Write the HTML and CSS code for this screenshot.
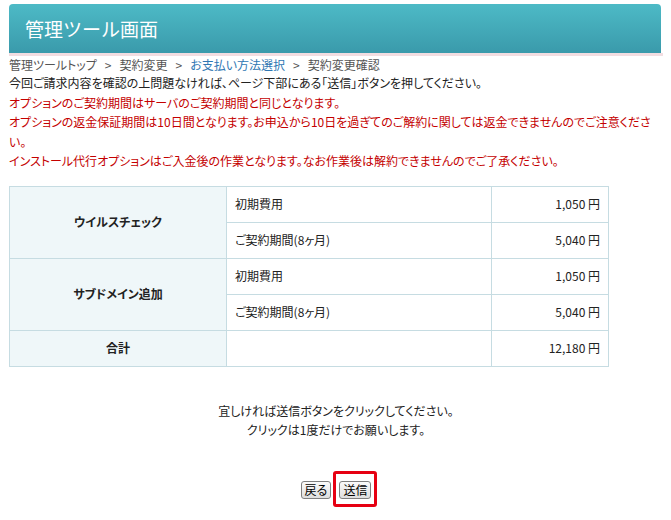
FILE: index.html
```html
<!DOCTYPE html>
<html lang="ja">
<head>
<meta charset="utf-8">
<title>管理ツール画面</title>
<link rel="stylesheet" href="styles.css">
</head>
<body>
<div class="page">
  <header class="header">
    <h1 class="header-title">管理ツール画面</h1>
  </header>
  <div class="header-rule"></div>

  <nav class="crumbs">
    <span class="crumb">管理ツールトップ</span><span class="sep">&gt;</span><span class="crumb">契約変更</span><span class="sep">&gt;</span><a class="crumb-link" href="#">お支払い方法選択</a><span class="sep">&gt;</span><span class="crumb">契約変更確認</span>
  </nav>

  <div class="notes">
    <p class="note">今回ご請求内容を確認の上問題なければ、ページ下部にある「送信」ボタンを押してください。</p>
    <p class="note warn">オプションのご契約期間はサーバのご契約期間と同じとなります。</p>
    <p class="note warn">オプションの返金保証期間は10日間となります。お申込から10日を過ぎてのご解約に関しては返金できませんのでご注意ください。</p>
    <p class="note warn">インストール代行オプションはご入金後の作業となります。なお作業後は解約できませんのでご了承ください。</p>
  </div>

  <table class="bill">
    <tbody>
      <tr>
        <th class="item" rowspan="2">ウイルスチェック</th>
        <td class="desc">初期費用</td>
        <td class="price">1,050 円</td>
      </tr>
      <tr>
        <td class="desc">ご契約期間(8ヶ月)</td>
        <td class="price">5,040 円</td>
      </tr>
      <tr>
        <th class="item" rowspan="2">サブドメイン追加</th>
        <td class="desc">初期費用</td>
        <td class="price">1,050 円</td>
      </tr>
      <tr>
        <td class="desc">ご契約期間(8ヶ月)</td>
        <td class="price">5,040 円</td>
      </tr>
      <tr>
        <th class="item">合計</th>
        <td class="desc"></td>
        <td class="price">12,180 円</td>
      </tr>
    </tbody>
  </table>

  <div class="confirm">
    <p class="confirm-line">宜しければ送信ボタンをクリックしてください。</p>
    <p class="confirm-line">クリックは1度だけでお願いします。</p>
  </div>

  <div class="actions">
    <button class="btn" type="button">戻る</button>
    <span class="highlight"><button class="btn" type="button">送信</button></span>
  </div>
</div>
</body>
</html>
```

FILE: styles.css
```css
html, body {
  background: #ffffff;
}

body {
  margin: 4px 8px 0 9px;
  padding-bottom: 20px;
  font-family: "Noto Sans CJK JP", "Noto Sans", sans-serif;
  font-size: 12px;
  color: #222222;
  font-feature-settings: "palt";
}

.page {
  width: 654px;
}

.header {
  margin-right: 2px;
  height: 49px;
  display: flex;
  align-items: center;
  padding-left: 16px;
  background: linear-gradient(#4dbac6, #3a9aab);
  border-radius: 4px 4px 0 0;
}

.header-title {
  margin: 0;
  font-size: 19px;
  font-weight: normal;
  color: #ffffff;
  font-feature-settings: normal;
  letter-spacing: 0;
}

.header-rule {
  height: 3px;
  background: #f2dde1;
}

.crumbs {
  line-height: 16px;
  color: #555555;
  margin-top: 1px;
}

.sep {
  margin: 0 8px;
}

.crumb-link {
  color: #2f77b3;
  text-decoration: none;
}

.notes {
  line-height: 19.5px;
}

.note {
  margin: 0;
}

.warn {
  color: #c40000;
}

.bill {
  margin-top: 15px;
  width: 600px;
  border-collapse: collapse;
  table-layout: fixed;
}

.bill th,
.bill td {
  height: 33px;
  padding: 0 8px 2px;
  border: 1px solid #c6dce2;
}

.item {
  width: 200px;
  background: #eff7f9;
  font-weight: bold;
  text-align: center;
  color: #222222;
}

.desc {
  width: 248px;
  text-align: left;
}

.price {
  text-align: right;
}

.confirm {
  margin-top: 34px;
  text-align: center;
  line-height: 19px;
}

.confirm-line {
  margin: 0;
}

.actions {
  margin-top: 42px;
  display: flex;
  justify-content: center;
  gap: 8px;
}

.btn {
  font-family: inherit;
  font-size: 12px;
  font-feature-settings: "palt";
  color: #000000;
  padding: 0 3px;
  height: 18px;
  line-height: 16px;
  border: 1px solid #7f7f7f;
  border-radius: 3px;
  background: linear-gradient(#fbfbfb, #dedede);
}

.highlight {
  position: relative;
  display: inline-flex;
}

.highlight::after {
  content: "";
  position: absolute;
  top: -10px;
  bottom: -8px;
  left: -6px;
  right: -6px;
  border: 3px solid #e60012;
  border-radius: 3px;
  pointer-events: none;
}
```
